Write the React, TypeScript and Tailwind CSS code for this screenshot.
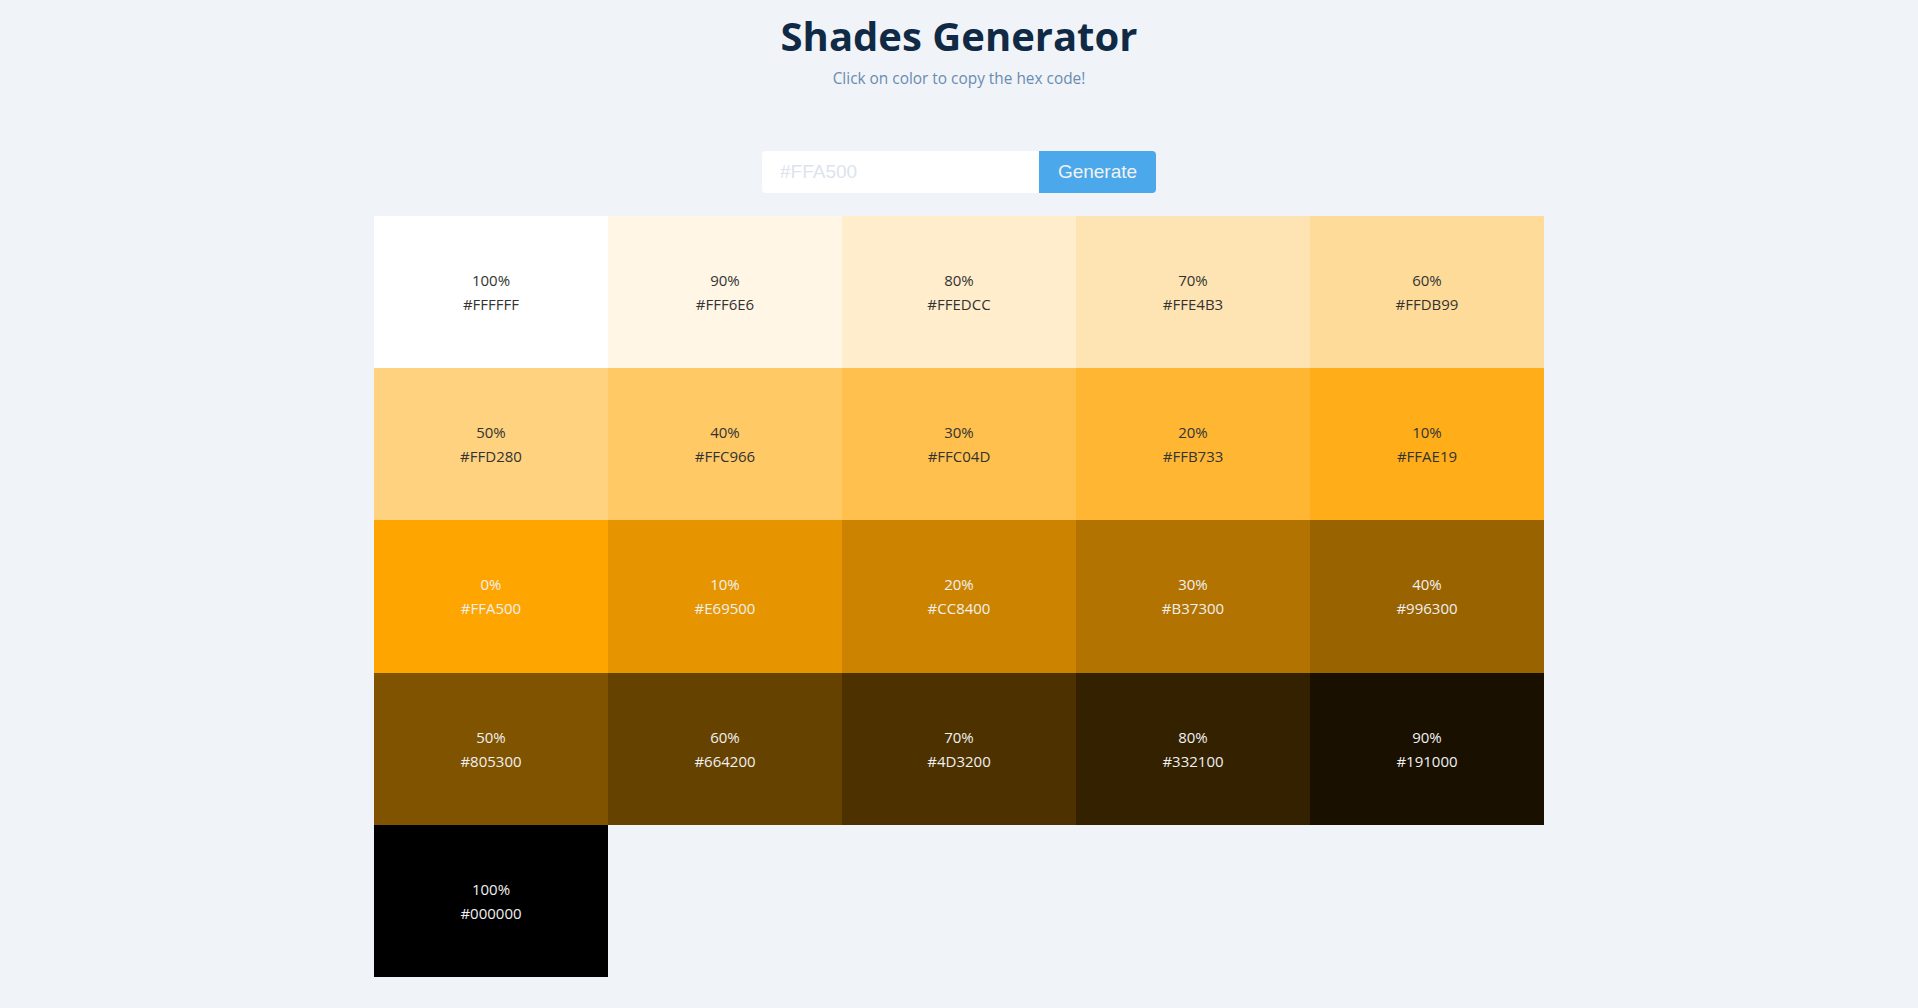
import React from "react";

const tints = [
  { p: "100%", h: "#FFFFFF" },
  { p: "90%", h: "#FFF6E6" },
  { p: "80%", h: "#FFEDCC" },
  { p: "70%", h: "#FFE4B3" },
  { p: "60%", h: "#FFDB99" },
  { p: "50%", h: "#FFD280" },
  { p: "40%", h: "#FFC966" },
  { p: "30%", h: "#FFC04D" },
  { p: "20%", h: "#FFB733" },
  { p: "10%", h: "#FFAE19" },
];
const shades = [
  { p: "0%", h: "#FFA500" },
  { p: "10%", h: "#E69500" },
  { p: "20%", h: "#CC8400" },
  { p: "30%", h: "#B37300" },
  { p: "40%", h: "#996300" },
  { p: "50%", h: "#805300" },
  { p: "60%", h: "#664200" },
  { p: "70%", h: "#4D3200" },
  { p: "80%", h: "#332100" },
  { p: "90%", h: "#191000" },
  { p: "100%", h: "#000000" },
];

export default function App() {
  const cells = [
    ...tints.map((c) => ({ ...c, light: false })),
    ...shades.map((c) => ({ ...c, light: true })),
  ];
  return (
    <div
      className="min-h-[1008px] w-full bg-[#f0f4f8] flex flex-col items-center"
      style={{ fontFamily: '"Open Sans", "Noto Sans", sans-serif' }}
    >
      <h1 className="mt-[11px] text-[40px] leading-[50px] font-bold tracking-[0px] text-[#102a45]">
        Shades Generator
      </h1>
      <p className="mt-[7px] text-[15.4px] leading-[22px] text-[#6a8bb0]">
        Click on color to copy the hex code!
      </p>
      <div
        className="mt-[61px] flex h-[42px]"
        style={{ fontFamily: '"Liberation Sans", Arial, sans-serif' }}
      >
        <input
          className="w-[277px] h-full rounded-l-[4px] bg-white px-[18px] text-[19px] text-[#333] placeholder:text-[#dde3ee] outline-none"
          placeholder="#FFA500"
        />
        <button className="w-[117px] h-full rounded-r-[4px] bg-[#4ba8ea] text-[19px] text-[#f2f2f2]">
          Generate
        </button>
      </div>
      <div className="mt-[23px] w-[1170px] grid grid-cols-5">
        {cells.map((c, i) => (
          <div
            key={i}
            className={`h-[152.2px] flex flex-col items-center justify-center text-[15px] leading-[24px] ${
              c.light ? "text-[#f0f0f0]" : "text-[#333333]"
            }`}
            style={{ backgroundColor: c.h }}
          >
            <span>{c.p}</span>
            <span>{c.h}</span>
          </div>
        ))}
      </div>
    </div>
  );
}
